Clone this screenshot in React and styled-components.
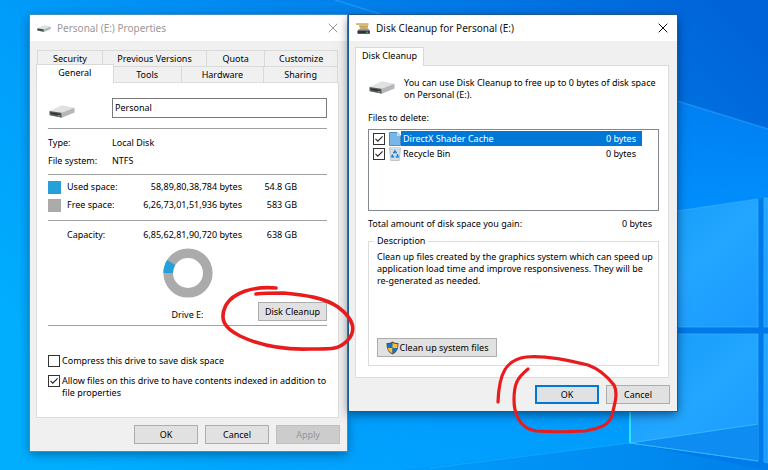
import React from "react";
import styled, { createGlobalStyle, css } from "styled-components";

const GlobalStyle = createGlobalStyle`
  *, *::before, *::after { box-sizing: border-box; }
  html, body, #root { height: 100%; }
  body {
    margin: 0;
    font: 9px/12px "Noto Sans", "Open Sans", sans-serif;
    color: #000;
    background: #0090f5;
  }
  h1, h2, p, dl, dd, ul, fieldset { margin: 0; padding: 0; }
  button, input { font: inherit; color: inherit; }
`;

/* ---------- desktop ---------- */

const Desktop = styled.main`
  position: relative;
  min-height: 100%;
  overflow: hidden;
  display: flex;
  align-items: flex-start;
  gap: 2px;
  padding: 15px 91px 19px 30px;
`;

const WallpaperArt = styled.svg`
  position: absolute;
  inset: 0;
  width: 100%;
  height: 100%;
`;

function Wallpaper() {
  return (
    <WallpaperArt viewBox="0 0 768 470" preserveAspectRatio="none" aria-hidden="true">
      <defs>
        <linearGradient id="sky" x1="0" y1="0.7" x2="1" y2="0.1">
          <stop offset="0" stopColor="#00aefe" />
          <stop offset="0.3" stopColor="#009dfa" />
          <stop offset="0.65" stopColor="#0080ea" />
          <stop offset="1" stopColor="#0064d8" />
        </linearGradient>
        <linearGradient id="beam" gradientUnits="userSpaceOnUse" x1="0" y1="0" x2="0" y2="470">
          <stop offset="0" stopColor="#0094fa" stopOpacity="0" />
          <stop offset="0.22" stopColor="#0088fc" stopOpacity="0.7" />
          <stop offset="0.45" stopColor="#0092ff" stopOpacity="0.9" />
          <stop offset="1" stopColor="#00a2ff" stopOpacity="0.8" />
        </linearGradient>
        <linearGradient id="fade" gradientUnits="userSpaceOnUse" x1="60" y1="0" x2="460" y2="0">
          <stop offset="0" stopColor="#000" />
          <stop offset="1" stopColor="#fff" />
        </linearGradient>
        <mask id="fadeIn">
          <rect width="768" height="470" fill="url(#fade)" />
        </mask>
        <linearGradient id="floor" x1="0" y1="0" x2="1" y2="0">
          <stop offset="0" stopColor="#009dfb" />
          <stop offset="1" stopColor="#0080ea" />
        </linearGradient>
        <linearGradient id="pane" x1="0" y1="0" x2="1" y2="1">
          <stop offset="0" stopColor="#149af8" />
          <stop offset="0.5" stopColor="#22a6ff" />
          <stop offset="1" stopColor="#1a98ff" />
        </linearGradient>
      </defs>
      <rect width="768" height="470" fill="url(#sky)" />
      <path d="M0 0H335L677 101L768 129V470H0z" fill="url(#beam)" mask="url(#fadeIn)" />
      <path d="M335 0L390 17M677 101L768 129" stroke="#2ba0fb" strokeWidth="1.5" opacity="0.6" />
      <path d="M400 470L630 443L768 463V470z" fill="url(#floor)" />
      <path d="M430 468L630 443" stroke="#18b4ff" strokeWidth="1" opacity="0.6" />
      <path d="M630 218L764 198H768V470L630 443z" fill="#0079ea" />
      <path d="M630 218L758 199V327H630zM764 198H768V327H764z" fill="url(#pane)" stroke="#3bb4ff" strokeOpacity="0.7" />
      <path d="M630 334H758V461L630 443zM764 334H768V463L764 462z" fill="url(#pane)" stroke="#3bb4ff" strokeOpacity="0.7" />
      <path d="M631 443L758 424V461z" fill="#0e8cf2" />
      <path d="M630 443L758 424M630 443L758 461" stroke="#2ebcff" fill="none" />
      <path d="M630 334V443" stroke="#2ee2ff" strokeWidth="2" />
    </WallpaperArt>
  );
}

/* ---------- window frame ---------- */

const Window = styled.section`
  position: relative;
  flex: ${(p) => p.$grow} 1 0;
  min-width: 0;
  display: flex;
  flex-direction: column;
  background: #f0f0f0;
  box-shadow: 0 0 0 1px ${(p) => (p.$active ? "#1a5a8c" : "#3f8fc4")},
    0 3px 10px rgba(0, 20, 50, ${(p) => (p.$active ? 0.6 : 0.45)});
`;

const TitleBar = styled.header`
  display: flex;
  align-items: center;
  gap: 6px;
  height: 26px;
  padding: 0 8px 0 7px;
  background: #fff;
  color: ${(p) => (p.$active ? "#111" : "#999")};
`;

const Title = styled.h1`
  flex: 1;
  font: 400 10px/16px "Noto Sans", "Open Sans", sans-serif;
  white-space: nowrap;
`;

const CloseButton = styled.button`
  display: grid;
  place-items: center;
  width: 12px;
  height: 12px;
  padding: 0;
  border: 0;
  background: none;
`;

const WindowBody = styled.div`
  display: flex;
  flex-direction: column;
  padding: ${(p) => p.$top}px 7px 7px 6px;
`;

const Panel = styled.div`
  display: flex;
  flex-direction: column;
  margin-right: 1px;
  padding: ${(p) => p.$pad};
  border: 1px solid #dcdcdc;
  background: #fff;
`;

const Actions = styled.footer`
  display: flex;
  justify-content: flex-end;
  gap: 7px;
  padding-top: 7px;
`;

const Button = styled.button`
  display: inline-flex;
  align-items: center;
  justify-content: center;
  gap: 1px;
  min-width: ${(p) => p.$width || 64}px;
  height: 19px;
  padding: 0 5px;
  border: 1px solid #adadad;
  background: #e1e1e1;
  white-space: nowrap;
  &:disabled {
    border-color: #bfbfbf;
    background: #ccc;
    color: #969696;
  }
  ${(p) =>
    p.$primary &&
    css`
      border: 2px solid #0078d7;
    `}
`;

/* ---------- tabs ---------- */

const TabRow = styled.div`
  display: flex;
  margin: 0 2px 0 ${(p) => (p.$front ? 0 : 1)}px;
`;

const Tab = styled.button`
  flex: ${(p) => p.$grow} 1 0;
  height: 16px;
  padding: 0;
  border: 1px solid #d9d9d9;
  border-width: 1px 1px 0 0;
  background: #f0f0f0;
  white-space: nowrap;
  &:first-child { border-left-width: 1px; }
  &[aria-selected="true"] {
    position: relative;
    height: 19px;
    margin: -2px 0 -1px;
    padding-bottom: 3px;
    background: #fff;
  }
`;

const SingleTab = styled(Tab)`
  && {
    flex: none;
    align-self: flex-start;
    margin-top: 0;
    padding: 0 6px 2px;
  }
`;

/* ---------- shared content ---------- */

const Rule = styled.hr`
  width: 100%;
  margin: ${(p) => p.$gap};
  border: 0;
  border-top: 1px solid #a0a0a0;
`;

const CheckLabel = styled.label`
  display: flex;
  align-items: flex-start;
  gap: 2px;
`;

const CheckFrame = styled.span`
  display: grid;
  flex: none;
  > * { grid-area: 1 / 1; }
  svg { pointer-events: none; }
`;

const CheckInput = styled.input`
  appearance: none;
  width: 12px;
  height: 12px;
  margin: 0;
  border: 1px solid #333;
  background: #fff;
  & + svg { visibility: hidden; }
  &:checked + svg { visibility: visible; }
`;

function CheckBox(props) {
  return (
    <CheckFrame>
      <CheckInput type="checkbox" {...props} />
      <svg width="12" height="12" viewBox="0 0 12 12" fill="none" aria-hidden="true">
        <path d="M2.5 5.8L4.8 8.2L9.6 3.3" stroke="#222" strokeWidth="1.1" />
      </svg>
    </CheckFrame>
  );
}

const Marked = styled.span`
  position: relative;
  display: inline-flex;
`;

const Scribble = styled.svg`
  position: absolute;
  z-index: 5;
  left: ${(p) => p.$x}px;
  top: ${(p) => p.$y}px;
  fill: none;
  stroke: #e81c1c;
  stroke-linecap: round;
  stroke-linejoin: round;
  pointer-events: none;
`;

/* ---------- icons ---------- */

function DriveIcon({ width = 26 }) {
  return (
    <svg width={width} height={width / 2} viewBox="0 0 26 13" aria-hidden="true">
      <path d="M0.5 6L13 0.3L25.5 2.7L12.5 7.7z" fill="#e0e1e3" />
      <path d="M12.5 7.7L25.5 2.7V7.6L12.8 12.8z" fill="#b4b6ba" />
      <path d="M0.5 6L12.5 7.7L12.8 12.8L0.5 10.2z" fill="#5a5c5f" />
      <path d="M1.5 7.3L11.5 8.9V10.7L1.5 8.8z" fill="#303234" />
      <path d="M9 10.4L11 10.8" stroke="#3dd34d" strokeWidth="1.2" />
    </svg>
  );
}

function CleanupIcon() {
  return (
    <svg width="14" height="11" viewBox="0 0 14 11" aria-hidden="true">
      <path d="M0 0.3H12.5V1.8H0z" fill="#c9a557" />
      <path d="M3 1.8H12.5L11.5 6H4.5z" fill="#dcc07c" />
      <path d="M3 3.4H12M4 5H11.6" stroke="#b8923f" strokeWidth="0.7" />
      <path d="M3 5.8H12.5L14 8H1.5z" fill="#9a9da0" />
      <path d="M1.5 7.6H13.8V10.8H1.5z" fill="#303335" />
      <path d="M10 9.2H12" stroke="#48d157" strokeWidth="1" />
    </svg>
  );
}

function CloseIcon() {
  return (
    <svg width="10" height="10" viewBox="0 0 10 10" aria-hidden="true">
      <path d="M0.7 0.7L9.3 9.3M9.3 0.7L0.7 9.3" stroke="currentColor" strokeWidth="1" />
    </svg>
  );
}

function PageIcon() {
  return (
    <svg width="12" height="14" viewBox="0 0 12 14" aria-hidden="true">
      <path d="M0.5 0.5H8L11.5 4V13.5H0.5z" fill="#78b5e8" stroke="#4d8fc9" />
      <path d="M8 0.5V4H11.5z" fill="#c1e0f8" />
    </svg>
  );
}

function RecycleIcon() {
  return (
    <svg width="12" height="14" viewBox="0 0 12 14" aria-hidden="true">
      <path d="M0.5 1L11.5 1L10.2 13.5H1.8z" fill="#d8dde2" stroke="#b3bac1" strokeWidth="0.8" />
      <path d="M0.8 0.8H11.2V2.2H0.8z" fill="#eef1f4" stroke="#adb4bb" strokeWidth="0.5" />
      <path d="M4.4 6.3L6 4.2L7.5 6.2M8.2 7.3L9 9.8L6.8 10M5.2 10L2.9 9.7L3.7 7.4" fill="none" stroke="#1380d4" strokeWidth="1.6" />
    </svg>
  );
}

function ShieldIcon() {
  return (
    <svg width="13" height="14" viewBox="0 0 13 14" aria-hidden="true">
      <path d="M6.5 0.5C8.3 1.8 10.3 2.2 12.4 2.1C12.5 7.6 11.3 11.2 6.5 13.6C1.7 11.2 0.5 7.6 0.6 2.1C2.7 2.2 4.7 1.8 6.5 0.5z" fill="#4a4f55" />
      <path d="M6.5 1.7V7H1.6C1.5 5.7 1.5 4.4 1.6 3.1C3.4 3.1 5 2.7 6.5 1.7z" fill="#1473cc" />
      <path d="M6.5 1.7C8 2.7 9.6 3.1 11.4 3.1C11.5 4.4 11.5 5.7 11.4 7H6.5z" fill="#fcc02c" />
      <path d="M6.5 7V12.4C3.4 10.9 2 9.3 1.6 7z" fill="#fcc02c" />
      <path d="M6.5 7H11.4C11 9.3 9.6 10.9 6.5 12.4z" fill="#1473cc" />
    </svg>
  );
}

/* ---------- properties window ---------- */

const NameRow = styled.div`
  display: grid;
  grid-template-columns: 64px 1fr;
  align-items: center;
  svg { margin: 7px 0 0 1px; }
`;

const NameInput = styled.input`
  width: 100%;
  height: 20px;
  padding: 0 2px 2px;
  border: 1px solid #7a7a7a;
  border-radius: 0;
  background: #fff;
`;

const Facts = styled.dl`
  display: grid;
  grid-template-columns: 64px 1fr;
  line-height: 18px;
`;

const SpaceTable = styled.table`
  width: calc(100% - 30px);
  border-collapse: collapse;
  line-height: 18px;
  th, td { padding: 0; font-weight: 400; text-align: right; white-space: nowrap; }
  th { text-align: left; }
  td:first-child { width: 19px; text-align: left; }
  td:last-child { width: 55px; }
`;

const Swatch = styled.span`
  display: block;
  width: 13px;
  height: 13px;
  background: ${(p) => p.$color};
`;

const DriveChart = styled.figure`
  display: grid;
  grid-template-columns: 1fr auto 1fr;
  align-items: end;
  margin: 4px 0 0;
  > svg { grid-column: 2; }
`;

const DriveCaption = styled.figcaption`
  grid-column: 2;
  grid-row: 2;
  text-align: center;
`;

const CleanupSlot = styled.div`
  grid-column: 3;
  grid-row: 2;
  display: flex;
  justify-content: flex-end;
  padding-top: 4px;
`;

const Options = styled.div`
  display: flex;
  flex-direction: column;
  gap: 8px;
`;

function PropertiesWindow() {
  return (
    <Window $grow={317} aria-label="Personal (E:) Properties">
      <TitleBar>
        <DriveIcon width={14} />
        <Title>Personal (E:) Properties</Title>
        <CloseButton aria-label="Close"><CloseIcon /></CloseButton>
      </TitleBar>
      <WindowBody $top={9}>
        <div role="tablist" aria-label="Property pages">
          <TabRow>
            <Tab role="tab" $grow={65}>Security</Tab>
            <Tab role="tab" $grow={105}>Previous Versions</Tab>
            <Tab role="tab" $grow={58}>Quota</Tab>
            <Tab role="tab" $grow={73}>Customize</Tab>
          </TabRow>
          <TabRow $front>
            <Tab role="tab" aria-selected="true" $grow={77}>General</Tab>
            <Tab role="tab" $grow={68}>Tools</Tab>
            <Tab role="tab" $grow={83}>Hardware</Tab>
            <Tab role="tab" $grow={74}>Sharing</Tab>
          </TabRow>
        </div>
        <Panel $pad="15px 11px 18px">
          <NameRow>
            <DriveIcon />
            <NameInput aria-label="Drive name" defaultValue="Personal" />
          </NameRow>
          <Rule $gap="10px 0 5px" />
          <Facts>
            <dt>Type:</dt><dd>Local Disk</dd>
            <dt>File system:</dt><dd>NTFS</dd>
          </Facts>
          <Rule $gap="4px 0 3px" />
          <SpaceTable>
            <tbody>
              <tr>
                <td><Swatch $color="#26a0da" /></td>
                <th scope="row">Used space:</th>
                <td>58,89,80,38,784 bytes</td>
                <td>54.8 GB</td>
              </tr>
              <tr>
                <td><Swatch $color="#ababab" /></td>
                <th scope="row">Free space:</th>
                <td>6,26,73,01,51,936 bytes</td>
                <td>583 GB</td>
              </tr>
            </tbody>
          </SpaceTable>
          <Rule $gap="6px 0 5px" />
          <SpaceTable>
            <tbody>
              <tr>
                <td />
                <th scope="row">Capacity:</th>
                <td>6,85,62,81,90,720 bytes</td>
                <td>638 GB</td>
              </tr>
            </tbody>
          </SpaceTable>
          <DriveChart>
            <svg width="50" height="50" viewBox="0 0 50 50" fill="none" role="img" aria-label="Used and free space">
              <circle cx="25" cy="25" r="19.8" stroke="#ababab" strokeWidth="9.6" />
              <path d="M5.2 25A19.8 19.8 0 0 1 8.2 14.5" stroke="#26a0da" strokeWidth="9.6" />
            </svg>
            <DriveCaption>Drive E:</DriveCaption>
            <CleanupSlot>
              <Marked>
                <Button $width={69}>Disk Cleanup</Button>
                <Scribble $x={-40} $y={-20} width="140" height="76" viewBox="218 282 140 76" strokeWidth="3.6" aria-hidden="true">
                  <path d="M276 288C252 286 233 293 226 305C219 319 224 328 240 336C261 346 282 350 310 349C331 349 338 350 347 341C357 331 354 319 338 307C325 298 306 295 284 293C272 293 264 293 256 294" />
                </Scribble>
              </Marked>
            </CleanupSlot>
          </DriveChart>
          <Rule $gap="4px 0 29px" />
          <Options>
            <CheckLabel><CheckBox />Compress this drive to save disk space</CheckLabel>
            <CheckLabel>
              <CheckBox defaultChecked />
              <span>Allow files on this drive to have contents indexed in addition to file properties</span>
            </CheckLabel>
          </Options>
        </Panel>
        <Actions>
          <Button>OK</Button>
          <Button>Cancel</Button>
          <Button disabled>Apply</Button>
        </Actions>
      </WindowBody>
    </Window>
  );
}

/* ---------- cleanup window ---------- */

const Intro = styled.div`
  display: grid;
  grid-template-columns: 36px 1fr;
  svg { margin: 4px 0 0 1px; }
`;

const ListHeading = styled.h2`
  margin: 11px 0 5px;
  font: inherit;
`;

const FileList = styled.ul`
  height: 82px;
  padding: 1px 16px 0 4px;
  border: 1px solid #828790;
  list-style: none;
`;

const FileRow = styled.label`
  display: grid;
  grid-template-columns: 16px 12px 1fr;
  align-items: center;
  height: 15px;
`;

const FileInfo = styled.span`
  display: flex;
  justify-content: space-between;
  padding: 0 6px 0 2px;
  line-height: 15px;
  background: ${(p) => (p.$selected ? "#0078d7" : "none")};
  color: ${(p) => (p.$selected ? "#fff" : "inherit")};
`;

const TotalRow = styled.div`
  display: flex;
  justify-content: space-between;
  margin: 7px 7px 5px 0;
`;

const Description = styled.fieldset`
  display: flex;
  flex-direction: column;
  align-items: flex-start;
  min-width: 0;
  padding: 4px 4px 8px 8px;
  border: 1px solid #dcdcdc;
  legend { margin-left: -3px; padding: 0 3px; }
  p { min-height: 87px; }
`;

const files = [
  { name: "DirectX Shader Cache", size: "0 bytes", Icon: PageIcon, selected: true },
  { name: "Recycle Bin", size: "0 bytes", Icon: RecycleIcon },
];

function CleanupWindow() {
  return (
    <Window $grow={328} $active aria-label="Disk Cleanup for Personal (E:)">
      <TitleBar $active>
        <CleanupIcon />
        <Title>Disk Cleanup for Personal (E:)</Title>
        <CloseButton aria-label="Close"><CloseIcon /></CloseButton>
      </TitleBar>
      <WindowBody $top={6}>
        <SingleTab role="tab" aria-selected="true">Disk Cleanup</SingleTab>
        <Panel $pad="11px 9px 11px 12px">
          <Intro>
            <DriveIcon />
            <p>You can use Disk Cleanup to free up to 0 bytes of disk space on Personal (E:).</p>
          </Intro>
          <ListHeading>Files to delete:</ListHeading>
          <FileList>
            {files.map(({ name, size, Icon, selected }) => (
              <li key={name}>
                <FileRow>
                  <CheckBox defaultChecked />
                  <Icon />
                  <FileInfo $selected={selected}><span>{name}</span><span>{size}</span></FileInfo>
                </FileRow>
              </li>
            ))}
          </FileList>
          <TotalRow><span>Total amount of disk space you gain:</span><span>0 bytes</span></TotalRow>
          <Description>
            <legend>Description</legend>
            <p>
              Clean up files created by the graphics system which can speed up application load time
              and improve responsiveness. They will be re-generated as needed.
            </p>
            <Button $width={120}><ShieldIcon />Clean up system files</Button>
          </Description>
        </Panel>
        <Actions>
          <Marked>
            <Button $primary>OK</Button>
            <Scribble $x={-43} $y={-34} width="130" height="90" viewBox="492 352 130 90" strokeWidth="3.2" aria-hidden="true">
              <path d="M498 403C499 374 506 361 526 358C545 356 572 362 588 366C599 370 607 377 614 386C619 396 613 409 612 417C608 427 600 429 585 432C567 433 550 433 536 432C520 430 514 415 514 401C514 385 517 379 528 370" />
            </Scribble>
          </Marked>
          <Button>Cancel</Button>
        </Actions>
      </WindowBody>
    </Window>
  );
}

export default function App() {
  return (
    <>
      <GlobalStyle />
      <Desktop>
        <Wallpaper />
        <PropertiesWindow />
        <CleanupWindow />
      </Desktop>
    </>
  );
}
